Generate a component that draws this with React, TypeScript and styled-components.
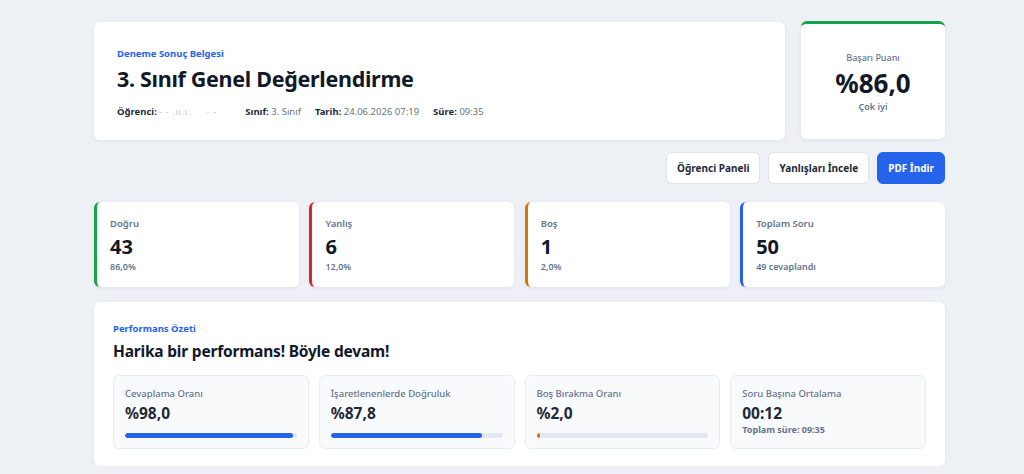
import styled, { createGlobalStyle } from 'styled-components'

const GlobalStyle = createGlobalStyle`
  html, body {
    margin: 0;
    padding: 0;
    background: #edf1f6;
    font-family: "Noto Sans", "Open Sans", sans-serif;
    color: #1e293b;
  }
  * { box-sizing: border-box; }
`

const Page = styled.main`
  width: 851px;
  margin-left: 94px;
  padding-top: 21px;
  display: flex;
  flex-direction: column;
`

const TopRow = styled.section`
  display: grid;
  grid-template-columns: 1fr 144px;
  gap: 16px;
`

const Card = styled.div`
  background: #fff;
  border-radius: 6px;
  box-shadow: 0 1px 4px rgba(15, 23, 42, 0.06);
`

const HeaderCard = styled(Card)`
  height: 118px;
  margin-top: 1px;
  padding: 25px 23px 0;
`

const Eyebrow = styled.div`
  font-size: 9.5px;
  font-weight: 700;
  color: #2563eb;
  line-height: 14px;
`

const Title = styled.h1`
  margin: 2px 0 0;
  font-size: 21.5px;
  font-weight: 700;
  color: #111827;
  line-height: 32px;
  letter-spacing: -0.3px;
`

const Meta = styled.div`
  margin-top: 10px;
  display: flex;
  gap: 14px;
  font-size: 9.5px;
  line-height: 14px;
  color: #6b7280;

  b {
    color: #1f2937;
    font-weight: 700;
  }
`

const Blurred = styled.span`
  display: inline-block;
  width: 72px;
  color: #b6bcc6;
  filter: blur(0.6px);
  font-size: 8px;
  letter-spacing: 1px;
`

const ScoreCard = styled(Card)`
  height: 118px;
  border-top: 3px solid #16a34a;
  display: flex;
  flex-direction: column;
  align-items: center;
  padding-top: 27px;
`

const ScoreLabel = styled.div`
  font-size: 9px;
  color: #64748b;
  font-weight: 500;
  line-height: 14px;
`

const ScoreValue = styled.div`
  font-size: 26px;
  font-weight: 700;
  color: #111827;
  line-height: 28px;
  margin-top: 4px;
`

const ScoreNote = styled.div`
  font-size: 9px;
  color: #64748b;
  font-weight: 600;
  line-height: 12px;
  margin-top: 4px;
`

const Actions = styled.div`
  display: flex;
  justify-content: flex-end;
  gap: 8px;
  margin-top: 12px;
`

const Button = styled.button<{ $primary?: boolean }>`
  height: 32px;
  padding: 0 10px;
  border-radius: 6px;
  font-family: inherit;
  font-size: 10px;
  font-weight: 700;
  cursor: pointer;
  border: 1px solid ${(p) => (p.$primary ? '#2563eb' : '#dfe4ec')};
  background: ${(p) => (p.$primary ? '#2563eb' : '#fff')};
  color: ${(p) => (p.$primary ? '#fff' : '#1f2937')};
`

const Stats = styled.section`
  margin-top: 18px;
  display: grid;
  grid-template-columns: repeat(4, 1fr);
  gap: 10.5px;
`

const StatCard = styled(Card)<{ $accent: string }>`
  height: 85px;
  border-left: 3px solid ${(p) => p.$accent};
  padding: 15px 13px 0;
`

const StatLabel = styled.div`
  font-size: 9.5px;
  color: #64748b;
  font-weight: 600;
  line-height: 14px;
`

const StatValue = styled.div`
  font-size: 20px;
  font-weight: 700;
  color: #111827;
  line-height: 26px;
  margin-top: 3px;
`

const StatSub = styled.div`
  font-size: 9px;
  color: #64748b;
  font-weight: 600;
  line-height: 14px;
`

const PerfCard = styled(Card)`
  margin-top: 15px;
  height: 164px;
  padding: 20px 19px 0;
`

const PerfTitle = styled.h2`
  margin: 3px 0 0;
  font-size: 15.5px;
  font-weight: 700;
  color: #111827;
  line-height: 24px;
  letter-spacing: -0.2px;
`

const Metrics = styled.div`
  margin-top: 12px;
  display: grid;
  grid-template-columns: repeat(4, 1fr);
  gap: 10px;
`

const Metric = styled.div`
  height: 74px;
  background: #f8fafc;
  border: 1px solid #e8edf3;
  border-radius: 6px;
  padding: 11px 11px 0;
`

const MetricLabel = styled.div`
  font-size: 9.5px;
  color: #64748b;
  font-weight: 500;
  line-height: 14px;
`

const MetricValue = styled.div`
  font-size: 15.5px;
  font-weight: 700;
  color: #1f2937;
  line-height: 22px;
  margin-top: 1px;
`

const Track = styled.div`
  margin-top: 9px;
  height: 5px;
  border-radius: 3px;
  background: #e2e8f0;
  overflow: hidden;
`

const Fill = styled.div<{ $color: string }>`
  height: 100%;
  border-radius: 3px;
  background: ${(p) => p.$color};
`

const MetricSub = styled.div`
  font-size: 9px;
  color: #64748b;
  font-weight: 700;
  line-height: 12px;
`

const stats = [
  { label: 'Doğru', value: '43', sub: '86,0%', accent: '#16a34a' },
  { label: 'Yanlış', value: '6', sub: '12,0%', accent: '#dc2626' },
  { label: 'Boş', value: '1', sub: '2,0%', accent: '#d97706' },
  { label: 'Toplam Soru', value: '50', sub: '49 cevaplandı', accent: '#2563eb' },
]

const bars = [
  { label: 'Cevaplama Oranı', value: '%98,0', pct: 98, color: '#2563eb' },
  { label: 'İşaretlenenlerde Doğruluk', value: '%87,8', pct: 87.8, color: '#2563eb' },
  { label: 'Boş Bırakma Oranı', value: '%2,0', pct: 2, color: '#d97706' },
]

export default function App() {
  return (
    <>
      <GlobalStyle />
      <Page>
        <TopRow>
          <HeaderCard>
            <Eyebrow>Deneme Sonuç Belgesi</Eyebrow>
            <Title>3. Sınıf Genel Değerlendirme</Title>
            <Meta>
              <span>
                <b>Öğrenci:</b> <Blurred>- - .ıı.ı: &nbsp;&nbsp;&nbsp; - -</Blurred>
              </span>
              <span>
                <b>Sınıf:</b> 3. Sınıf
              </span>
              <span>
                <b>Tarih:</b> 24.06.2026 07:19
              </span>
              <span>
                <b>Süre:</b> 09:35
              </span>
            </Meta>
          </HeaderCard>
          <ScoreCard>
            <ScoreLabel>Başarı Puanı</ScoreLabel>
            <ScoreValue>%86,0</ScoreValue>
            <ScoreNote>Çok iyi</ScoreNote>
          </ScoreCard>
        </TopRow>

        <Actions>
          <Button>Öğrenci Paneli</Button>
          <Button>Yanlışları İncele</Button>
          <Button $primary>PDF İndir</Button>
        </Actions>

        <Stats>
          {stats.map((s) => (
            <StatCard key={s.label} $accent={s.accent}>
              <StatLabel>{s.label}</StatLabel>
              <StatValue>{s.value}</StatValue>
              <StatSub>{s.sub}</StatSub>
            </StatCard>
          ))}
        </Stats>

        <PerfCard>
          <Eyebrow>Performans Özeti</Eyebrow>
          <PerfTitle>Harika bir performans! Böyle devam!</PerfTitle>
          <Metrics>
            {bars.map((b) => (
              <Metric key={b.label}>
                <MetricLabel>{b.label}</MetricLabel>
                <MetricValue>{b.value}</MetricValue>
                <Track>
                  <Fill $color={b.color} style={{ width: `${b.pct}%` }} />
                </Track>
              </Metric>
            ))}
            <Metric>
              <MetricLabel>Soru Başına Ortalama</MetricLabel>
              <MetricValue>00:12</MetricValue>
              <MetricSub>Toplam süre: 09:35</MetricSub>
            </Metric>
          </Metrics>
        </PerfCard>
      </Page>
    </>
  )
}
